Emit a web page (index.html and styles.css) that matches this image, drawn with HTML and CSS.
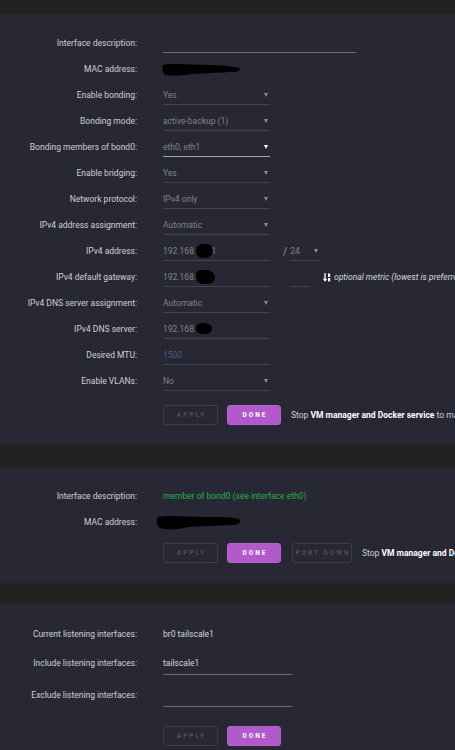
FILE: index.html
```html
<!DOCTYPE html>
<html lang="en">
<head>
    <meta charset="UTF-8">
    <meta name="viewport" content="width=device-width, initial-scale=1.0">
    <title>Network Settings</title>
    <link rel="stylesheet" href="styles.css">
</head>
<body>
    <section class="panel">
        <div class="row">
            <label>Interface description:</label>
            <div class="value"><div class="field input wide bright"></div></div>
        </div>
        <div class="row">
            <label>MAC address:</label>
            <div class="value">
                <svg class="blob" width="79" height="13" viewBox="0 0 79 13"><path d="M1 2 C8 0 28 2 44 2 C58 2 70 3 77 5 C79 7 77 9 70 9 C55 10 40 10 30 11 C20 13 8 13 3 12 C0 9 0 5 1 2Z"/></svg>
            </div>
        </div>
        <div class="row">
            <label>Enable bonding:</label>
            <div class="value"><div class="field select">Yes</div></div>
        </div>
        <div class="row">
            <label>Bonding mode:</label>
            <div class="value"><div class="field select">active-backup (1)</div></div>
        </div>
        <div class="row">
            <label>Bonding members of bond0:</label>
            <div class="value"><div class="field select focus">eth0, eth1</div></div>
        </div>
        <div class="row">
            <label>Enable bridging:</label>
            <div class="value"><div class="field select">Yes</div></div>
        </div>
        <div class="row">
            <label>Network protocol:</label>
            <div class="value"><div class="field select">IPv4 only</div></div>
        </div>
        <div class="row">
            <label>IPv4 address assignment:</label>
            <div class="value"><div class="field select">Automatic</div></div>
        </div>
        <div class="row">
            <label>IPv4 address:</label>
            <div class="value">
                <div class="field input">192.168.<span class="redact"></span><span class="tail">1</span></div>
                <span class="slash">/</span>
                <div class="field select mask">24</div>
            </div>
        </div>
        <div class="row">
            <label>IPv4 default gateway:</label>
            <div class="value">
                <div class="field input">192.168.<span class="redact gw"></span></div>
                <div class="field input metric"></div>
                <svg class="sort" width="9" height="9" viewBox="0 0 9 9"><path d="M2 0 V7.5 M0.4 5.8 L2 7.8 L3.6 5.8" stroke="#fff" stroke-width="1.3" fill="none"/><rect x="5" y="0.5" width="2.2" height="3.4" fill="#fff"/><rect x="5" y="5" width="2.2" height="3.4" fill="#fff"/></svg>
                <span class="hint">optional metric (lowest is preferred, 0 is default)</span>
            </div>
        </div>
        <div class="row">
            <label>IPv4 DNS server assignment:</label>
            <div class="value"><div class="field select">Automatic</div></div>
        </div>
        <div class="row">
            <label>IPv4 DNS server:</label>
            <div class="value"><div class="field input">192.168.<span class="redact dns"></span></div></div>
        </div>
        <div class="row">
            <label>Desired MTU:</label>
            <div class="value"><div class="field input placeholder">1500</div></div>
        </div>
        <div class="row">
            <label>Enable VLANs:</label>
            <div class="value"><div class="field select">No</div></div>
        </div>
        <div class="actions">
            <button class="btn" disabled>Apply</button>
            <button class="btn primary">Done</button>
            <span class="note">Stop <b>VM manager and Docker service</b> to make changes</span>
        </div>
    </section>

    <section class="panel">
        <div class="row">
            <label>Interface description:</label>
            <div class="value"><span class="green">member of bond0 (see interface eth0)</span></div>
        </div>
        <div class="row">
            <label>MAC address:</label>
            <div class="value">
                <svg class="blob shift" width="85" height="15" viewBox="0 0 85 15"><path d="M2 2 C12 0 30 2 48 2 C62 2 76 2 83 4 C85 6 84 9 78 10 C60 11 45 11 32 12 C22 15 10 15 4 13 C0 10 0 5 2 2Z"/></svg>
            </div>
        </div>
        <div class="actions tight">
            <button class="btn" disabled>Apply</button>
            <button class="btn primary">Done</button>
            <button class="btn wide-btn" disabled>Port down</button>
            <span class="note">Stop <b>VM manager and Docker service</b> to make changes</span>
        </div>
    </section>

    <section class="panel">
        <div class="row">
            <label>Current listening interfaces:</label>
            <div class="value"><span class="plain">br0 tailscale1</span></div>
        </div>
        <div class="row tall">
            <label>Include listening interfaces:</label>
            <div class="value"><div class="field input long bright plain">tailscale1</div></div>
        </div>
        <div class="row tall">
            <label>Exclude listening interfaces:</label>
            <div class="value"><div class="field input long bright"></div></div>
        </div>
        <div class="actions loose">
            <button class="btn" disabled>Apply</button>
            <button class="btn primary">Done</button>
        </div>
    </section>
</body>
</html>
```

FILE: styles.css
```css
body {
    margin: 0;
    padding-top: 14px;
    background: #222222;
    font-family: Roboto, "Noto Sans", sans-serif;
    font-size: 8.5px;
    color: #cfd0d3;
    overflow: hidden;
    white-space: nowrap;
}
.panel {
    background: #272834;
    padding: 16px 0 19px;
    margin-bottom: 23px;
    overflow: hidden;
}
.panel:nth-of-type(2) {
    padding-bottom: 20px;
    margin-bottom: 22px;
}
.row {
    display: grid;
    grid-template-columns: 137px auto;
    column-gap: 26px;
    align-items: center;
    height: 26px;
}
.row.tall {
    height: 32px;
}
.row label {
    text-align: right;
}
.value {
    display: flex;
    align-items: center;
}
.value > * {
    flex-shrink: 0;
}
.field {
    box-sizing: border-box;
    width: 107px;
    height: 19px;
    line-height: 18px;
    border-bottom: 1px solid #42444f;
    color: #81838a;
    display: flex;
    align-items: center;
    justify-content: space-between;
    padding-right: 2px;
}
.row.tall .field {
    height: 23px;
    line-height: 22px;
}
.field.wide {
    width: 193px;
}
.field.long {
    width: 129px;
}
.field.bright {
    border-bottom-color: #6c6d76;
}
.field.plain {
    color: #d6d7da;
}
.field.placeholder {
    color: #4d5c86;
}
.field.input {
    justify-content: flex-start;
}
.select::after {
    content: '';
    border-left: 2.5px solid transparent;
    border-right: 2.5px solid transparent;
    border-top: 4px solid #8a8c93;
}
.select.focus {
    border-bottom-color: #a5a6ab;
}
.select.focus::after {
    border-top-color: #ffffff;
}
.select.mask {
    width: 31px;
    padding-right: 3px;
}
.slash {
    margin: 0 3px 0 13px;
    color: #9a9ca2;
    font-size: 10px;
}
.metric {
    width: 20px;
    margin-left: 20px;
}
.sort {
    margin-left: 13px;
}
.hint {
    margin-left: 2px;
    font-style: italic;
    color: #d8d9dc;
}
.redact {
    display: inline-block;
    width: 17px;
    height: 14px;
    background: #000;
    border-radius: 45% 40% 50% 45%;
}
.redact.gw {
    width: 19px;
    height: 14px;
    border-radius: 30% 50% 45% 40%;
}
.redact.dns {
    width: 16px;
    height: 11px;
    border-radius: 40% 50% 50% 40%;
}
.tail {
    margin-left: -2px;
}
.blob {
    display: block;
    margin-left: -1px;
}
.blob.shift {
    margin-left: -7px;
}
.green {
    color: #22b24f;
}
.plain {
    color: #d6d7da;
}
.actions {
    display: flex;
    align-items: center;
    padding-left: 163px;
    margin-top: 11px;
}
.actions.tight {
    margin-top: 8px;
}
.actions.loose {
    margin-top: 15px;
}
.btn {
    flex-shrink: 0;
    box-sizing: border-box;
    width: 55px;
    height: 20px;
    margin: 0 9px 0 0;
    padding: 0 0 0 2px;
    border: 1px solid #3c3e49;
    border-radius: 3px;
    background: transparent;
    color: #4d4f5a;
    font-family: Roboto, sans-serif;
    font-size: 6.5px;
    font-weight: bold;
    letter-spacing: 2px;
    text-transform: uppercase;
}
.btn.primary {
    width: 54px;
    margin-right: 10px;
    background: #b259cc;
    border-color: #b65fcf;
    color: #ffffff;
}
.actions.tight .btn.primary {
    margin-right: 11px;
}
.btn.wide-btn {
    width: 60px;
    margin-right: 10px;
}
.note {
    flex-shrink: 0;
    color: #d0d1d4;
}
.note b {
    color: #ffffff;
}
```
